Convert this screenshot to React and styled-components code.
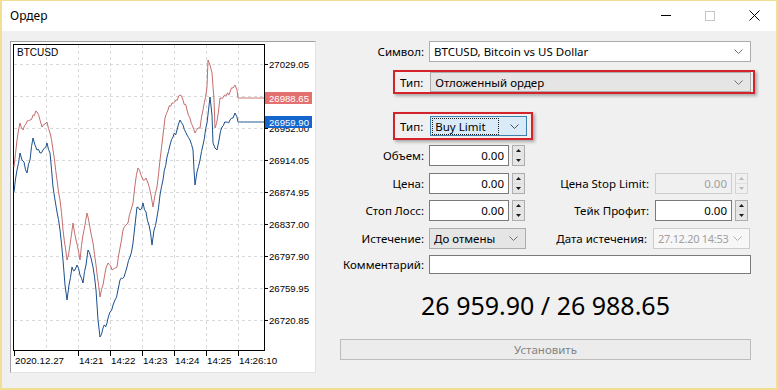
import styled, { createGlobalStyle } from 'styled-components'

const GlobalStyle = createGlobalStyle`
  html, body { margin: 0; padding: 0; background: #fff; }
  body { font-family: "Noto Sans", "Open Sans", sans-serif; }
`

const Window = styled.div`
  width: 778px;
  height: 390px;
  box-sizing: border-box;
  border: 2px solid #f1df93;
  border-top-width: 1px;
  display: flex;
  flex-direction: column;
  background: #f0f0f0;
`

const TitleBar = styled.div`
  height: 30px;
  flex: none;
  background: #fff;
  display: flex;
  align-items: center;
  padding-left: 8px;
  padding-bottom: 1px;
  box-sizing: border-box;
  font-size: 12px;
  color: #000;
`

const Title = styled.span`
  flex: 1;
`

const WinButton = styled.div`
  width: 44px;
  height: 29px;
  display: flex;
  align-items: center;
  justify-content: center;
`

const Body = styled.div`
  flex: 1;
  display: flex;
  gap: 24px;
  padding: 10px 0 0 8px;
`

const ChartFrame = styled.div`
  width: 306px;
  height: 332px;
  box-sizing: border-box;
  border: 1px solid;
  border-color: #a0a0a0 #e3e3e3 #e3e3e3 #a0a0a0;
  background: #fff;
  svg { display: block; }
`

const Form = styled.div`
  width: 411px;
  display: flex;
  flex-direction: column;
  font-size: 11.5px;
  color: #000;
`

const Row = styled.div`
  display: flex;
  align-items: center;
  height: ${p => p.h || 21}px;
  margin-top: ${p => p.mt || 0}px;
`

const Label = styled.div`
  width: 84px;
  margin-right: 5px;
  text-align: right;
  white-space: nowrap;
  flex: none;
`

const SideLabel = styled.div`
  flex: 1;
  text-align: right;
  margin-right: 6px;
  white-space: nowrap;
`

const Highlight = styled.div`
  display: flex;
  align-items: center;
  margin-top: ${p => p.mt}px;
  margin-left: 53px;
  width: ${p => p.w}px;
  box-sizing: border-box;
  border: 2px solid #d3232b;
  padding: ${p => p.pad};
  box-shadow: 2px 2px 3px rgba(0, 0, 0, 0.3);
  flex: none;
`

const HlLabel = styled.span`
  margin-right: 7px;
`

const Select = styled.div`
  box-sizing: border-box;
  height: ${p => p.h || 21}px;
  width: ${p => (p.w ? `${p.w}px` : 'auto')};
  flex: ${p => (p.w ? 'none' : 1)};
  display: flex;
  align-items: center;
  padding: 0 7px 0 4px;
  border: 1px solid ${p => p.border || '#acacac'};
  background: ${p => p.bg || '#e5e5e5'};
  color: ${p => (p.disabled ? '#a0a0a0' : '#000')};
  margin-right: ${p => p.mr || 0}px;
`

const SelectText = styled.span`
  flex: 1;
  white-space: nowrap;
  overflow: hidden;
  font-size: ${p => (p.tight ? '11px' : 'inherit')};
  letter-spacing: ${p => (p.tight ? '-0.3px' : 'normal')};
`

const FocusText = styled.span`
  flex: 1;
  margin-right: 12px;
  margin-left: -2px;
  padding: 0 2px;
  line-height: 15px;
  outline: 1px dotted #202020;
`

const TextBox = styled.div`
  box-sizing: border-box;
  height: ${p => p.h || 21}px;
  width: ${p => (p.w ? `${p.w}px` : 'auto')};
  flex: ${p => (p.w ? 'none' : 1)};
  display: flex;
  align-items: center;
  justify-content: flex-end;
  padding-right: 4px;
  border: 1px solid ${p => (p.disabled ? '#cccccc' : '#7a7a7a')};
  background: ${p => (p.disabled ? '#f0f0f0' : '#fff')};
  color: ${p => (p.disabled ? '#a0a0a0' : '#000')};
`

const Spinner = styled.div`
  box-sizing: border-box;
  width: 13px;
  height: 21px;
  margin-left: 3px;
  margin-right: ${p => p.mr || 0}px;
  border: 1px solid ${p => (p.disabled ? '#d5d5d5' : '#adadad')};
  background: ${p => (p.disabled ? '#f0f0f0' : '#e6e6e6')};
  display: flex;
  flex-direction: column;
`

const SpinHalf = styled.div`
  flex: 1;
  display: flex;
  align-items: center;
  justify-content: center;
  & + & { border-top: 1px solid ${p => (p.disabled ? '#e0e0e0' : '#c4c4c4')}; }
`

const BigPrice = styled.div`
  margin-top: 16px;
  height: 30px;
  line-height: 30px;
  text-align: center;
  font-size: 25px;
  color: #000;
`

const SubmitButton = styled.div`
  margin-top: 19px;
  height: 21px;
  box-sizing: border-box;
  border: 1px solid #bcbcbc;
  background: #ececec;
  color: #838383;
  display: flex;
  align-items: center;
  justify-content: center;
`

const Chevron = ({ color = '#707070' }) => (
  <svg width="9" height="5" viewBox="0 0 9 5">
    <polyline points="0.5,0.5 4.5,4.5 8.5,0.5" fill="none" stroke={color} strokeWidth="1" />
  </svg>
)

const Arrow = ({ up, disabled }) => (
  <svg width="5" height="3" viewBox="0 0 5 3">
    <polygon points={up ? '0,3 5,3 2.5,0' : '0,0 5,0 2.5,3'} fill={disabled ? '#b8b8b8' : '#1a1a1a'} />
  </svg>
)

const Spin = ({ disabled, mr }) => (
  <Spinner disabled={disabled} mr={mr}>
    <SpinHalf disabled={disabled}><Arrow up disabled={disabled} /></SpinHalf>
    <SpinHalf disabled={disabled}><Arrow disabled={disabled} /></SpinHalf>
  </Spinner>
)

function buildPath(pts, seed) {
  let s = seed
  const rnd = () => {
    s = (s * 16807) % 2147483647
    return s / 2147483647
  }
  let d = `M${pts[0][0]},${pts[0][1]}`
  for (let i = 1; i < pts.length; i++) {
    const [x0, y0] = pts[i - 1]
    const [x1, y1] = pts[i]
    const n = Math.max(1, Math.round((x1 - x0) / 1.4))
    const last = i === pts.length - 1
    for (let k = 1; k <= n; k++) {
      const x = x0 + ((x1 - x0) * k) / n
      let y = y0 + ((y1 - y0) * k) / n
      if (k < n && !last) y += (rnd() - 0.5) * 5
      d += ` L${x.toFixed(1)},${y.toFixed(1)}`
    }
  }
  return d
}

const bidPoints = [
  [14, 192], [17, 170], [20, 153], [22, 160], [24, 162], [27, 173], [30, 160], [33, 138], [35, 145],
  [37, 150], [40, 153], [43, 150], [47, 143], [50, 153], [53, 187], [55, 200], [57, 212], [60, 230],
  [63, 260], [65, 285], [67, 300], [69, 285], [72, 267], [75, 270], [77, 265], [80, 275], [83, 283],
  [86, 265], [88, 250], [91, 258], [93, 267], [96, 290], [98, 320], [100, 337], [103, 328], [107, 323],
  [110, 312], [113, 305], [115, 300], [118, 290], [120, 280], [124, 277], [127, 267], [130, 257],
  [133, 243], [135, 225], [137, 207], [140, 210], [143, 203], [146, 212], [149, 225], [152, 245],
  [154, 230], [157, 217], [160, 195], [163, 180], [167, 157], [170, 145], [173, 137], [177, 130],
  [180, 120], [183, 125], [187, 135], [190, 140], [193, 150], [194, 170], [195, 185], [197, 172],
  [200, 160], [203, 145], [207, 123], [210, 97], [212, 115], [213, 143], [215, 148], [217, 150],
  [219, 140], [222, 127], [226, 122], [230, 120], [233, 118], [235, 113], [237, 117], [238, 122],
  [264, 122],
]

const askPoints = [
  [14, 167], [17, 140], [20, 123], [23, 130], [26, 124], [30, 120], [33, 115], [37, 112], [40, 120],
  [42, 127], [45, 124], [47, 122], [50, 133], [53, 150], [57, 180], [60, 200], [63, 230], [67, 260],
  [70, 245], [73, 223], [76, 240], [80, 260], [83, 235], [87, 213], [90, 228], [93, 243], [96, 265],
  [100, 297], [103, 285], [106, 268], [108, 263], [112, 270], [117, 267], [120, 248], [123, 230],
  [126, 225], [128, 223], [131, 210], [133, 203], [135, 185], [138, 168], [141, 175], [143, 180],
  [146, 178], [148, 183], [151, 195], [153, 207], [155, 195], [157, 187], [160, 160], [163, 135],
  [165, 118], [168, 110], [172, 103], [176, 100], [180, 95], [183, 100], [187, 110], [190, 118],
  [195, 133], [198, 128], [200, 128], [203, 110], [207, 87], [208, 60], [210, 65], [212, 73],
  [214, 100], [215, 128], [218, 115], [220, 98], [225, 95], [230, 92], [233, 88], [235, 85],
  [237, 90], [238, 98], [264, 98],
]

const bidPath = buildPath(bidPoints, 12345)
const askPath = buildPath(askPoints, 67891)

const priceLevels = [
  { y: 64, t: '27029.05' },
  { y: 96, t: '' },
  { y: 128, t: '26952.00' },
  { y: 160, t: '26914.05' },
  { y: 192, t: '26874.95' },
  { y: 224, t: '26837.00' },
  { y: 256, t: '26797.90' },
  { y: 288, t: '26759.95' },
  { y: 320, t: '26720.85' },
]

const timeMarks = [
  { x: 14, t: '2020.12.27' },
  { x: 78, t: '14:21' },
  { x: 110, t: '14:22' },
  { x: 142, t: '14:23' },
  { x: 174, t: '14:24' },
  { x: 206, t: '14:25' },
  { x: 238, t: '14:26:10' },
]

const gridX = [46, 78, 110, 142, 174, 206, 238]

const chartFont = '"Liberation Sans", Arial, sans-serif'

const Chart = () => (
  <svg width="304" height="330" viewBox="11 42 304 330" fontFamily={chartFont}>
    <rect x="13.5" y="44.5" width="251" height="306" fill="#fff" stroke="#000" />
    {priceLevels.map(l => (
      <line key={l.y} x1="14" x2="264" y1={l.y + 0.5} y2={l.y + 0.5} stroke="#d9d9d9" strokeDasharray="3 3" />
    ))}
    {gridX.map(x => (
      <line key={x} x1={x + 0.5} x2={x + 0.5} y1="45" y2="350" stroke="#d9d9d9" strokeDasharray="3 3" />
    ))}
    <text x="17" y="56" fontSize="10" fill="#000">BTCUSD</text>
    <path d={askPath} fill="none" stroke="#c56d6d" strokeWidth="1" />
    <path d={bidPath} fill="none" stroke="#1b4f8e" strokeWidth="1" />
    {priceLevels.map(l => (
      <line key={`t${l.y}`} x1="265" x2="268" y1={l.y + 0.5} y2={l.y + 0.5} stroke="#000" />
    ))}
    {priceLevels.filter(l => l.t).map(l => (
      <text key={`p${l.y}`} x="269" y={l.y + 4} fontSize="9.6" fill="#000">{l.t}</text>
    ))}
    <rect x="265" y="92" width="47" height="12" fill="#e36f6f" />
    <text x="269" y="102" fontSize="9.6" fill="#fff">26988.65</text>
    <rect x="265" y="116" width="47" height="12" fill="#1466cc" />
    <text x="269" y="126" fontSize="9.6" fill="#fff">26959.90</text>
    {timeMarks.map(m => (
      <g key={m.x}>
        <line x1={m.x + 0.5} x2={m.x + 0.5} y1="351" y2="356" stroke="#000" />
        <text x={m.x + 1} y="364" fontSize="9.8" fill="#000">{m.t}</text>
      </g>
    ))}
  </svg>
)

export default function App() {
  return (
    <>
      <GlobalStyle />
      <Window>
        <TitleBar>
          <Title>Ордер</Title>
          <WinButton>
            <svg width="10" height="1"><rect width="10" height="1" fill="#000" /></svg>
          </WinButton>
          <WinButton>
            <svg width="10" height="10"><rect x="0.5" y="0.5" width="9" height="9" fill="none" stroke="#c4c4c4" /></svg>
          </WinButton>
          <WinButton>
            <svg width="11" height="11"><path d="M0.5,0.5 L10.5,10.5 M10.5,0.5 L0.5,10.5" stroke="#000" strokeWidth="1" /></svg>
          </WinButton>
        </TitleBar>
        <Body>
          <ChartFrame>
            <Chart />
          </ChartFrame>
          <Form>
            <Row>
              <Label>Символ:</Label>
              <Select bg="#fff" border="#acacac">
                <SelectText>BTCUSD, Bitcoin vs US Dollar</SelectText>
                <Chevron />
              </Select>
            </Row>
            <Highlight mt={8} w={362} pad="0 2px 0 5px">
              <HlLabel>Тип:</HlLabel>
              <Select h={20}>
                <SelectText>Отложенный ордер</SelectText>
                <Chevron />
              </Select>
            </Highlight>
            <Highlight mt={18} w={140} pad="2px 5px 2px 5px">
              <HlLabel>Тип:</HlLabel>
              <Select w={97} h={20} bg="#d9ebf9" border="#3c7fb1">
                <FocusText>Buy Limit</FocusText>
                <Chevron color="#505050" />
              </Select>
            </Highlight>
            <Row mt={5}>
              <Label>Объем:</Label>
              <TextBox w={80}>0.00</TextBox>
              <Spin />
            </Row>
            <Row mt={7}>
              <Label>Цена:</Label>
              <TextBox w={80}>0.00</TextBox>
              <Spin />
              <SideLabel>Цена Stop Limit:</SideLabel>
              <TextBox w={77} disabled>0.00</TextBox>
              <Spin disabled mr={3} />
            </Row>
            <Row mt={6}>
              <Label>Стоп Лосс:</Label>
              <TextBox w={80}>0.00</TextBox>
              <Spin />
              <SideLabel>Тейк Профит:</SideLabel>
              <TextBox w={77}>0.00</TextBox>
              <Spin mr={3} />
            </Row>
            <Row mt={7}>
              <Label>Истечение:</Label>
              <Select w={97}>
                <SelectText>До отмены</SelectText>
                <Chevron />
              </Select>
              <SideLabel>Дата истечения:</SideLabel>
              <Select w={97} mr={1} bg="#f7f7f7" border="#cccccc" disabled>
                <SelectText tight>27.12.20 14:53</SelectText>
                <Chevron color="#b0b0b0" />
              </Select>
            </Row>
            <Row mt={6} h={19}>
              <Label>Комментарий:</Label>
              <TextBox h={19} />
            </Row>
            <BigPrice>26 959.90 / 26 988.65</BigPrice>
            <SubmitButton>Установить</SubmitButton>
          </Form>
        </Body>
      </Window>
    </>
  )
}
